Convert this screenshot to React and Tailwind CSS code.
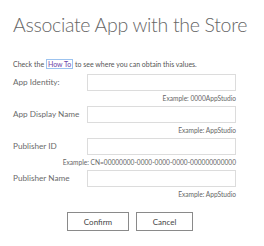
import React from "react";

const rows = [
  { label: "App Identity:", example: "Example: 0000AppStudio" },
  { label: "App Display Name", example: "Example: AppStudio" },
  { label: "Publisher ID", example: "Example: CN=00000000-0000-0000-0000-000000000000" },
  { label: "Publisher Name", example: "Example: AppStudio" },
];

export default function App() {
  return (
    <div
      className="w-[264px] h-[246px] bg-white pl-[13px] pt-[11px] overflow-hidden"
      style={{ fontFamily: 'Lato, "Open Sans", sans-serif' }}
    >
      <h1 className="text-[19.5px] leading-[28px] font-light tracking-[-0.3px] text-[#666] whitespace-nowrap">
        Associate App with the Store
      </h1>
      <p className="mt-[20px] text-[7px] leading-[10px] text-[#555] whitespace-nowrap">
        Check the{" "}
        <span className="text-[#6a3fa8] border border-[#9cc3ef] px-[1px]">How To</span> to see where
        you can obtain this values.
      </p>
      <div className="mt-[5px] flex flex-col gap-[3px]">
        {rows.map((r) => (
          <div key={r.label} className="flex flex-col w-[223px]">
            <div className="flex items-center h-[17px]">
              <span className="w-[74px] text-[8.2px] text-[#6b6b6b] whitespace-nowrap">{r.label}</span>
              <div className="w-[149px] h-[17px] border border-[#dcdcdc] bg-white" />
            </div>
            <div className="mt-[2px] h-[10px] leading-[10px] text-right text-[6.6px] text-[#666] whitespace-nowrap">
              {r.example}
            </div>
          </div>
        ))}
      </div>
      <div className="mt-[13px] ml-[54px] flex gap-[7px]">
        <button className="w-[62px] h-[19px] border border-[#8a8a8a] bg-white text-[8px] text-[#444]">
          Confirm
        </button>
        <button className="w-[57px] h-[19px] border border-[#8a8a8a] bg-white text-[8px] text-[#444]">
          Cancel
        </button>
      </div>
    </div>
  );
}
